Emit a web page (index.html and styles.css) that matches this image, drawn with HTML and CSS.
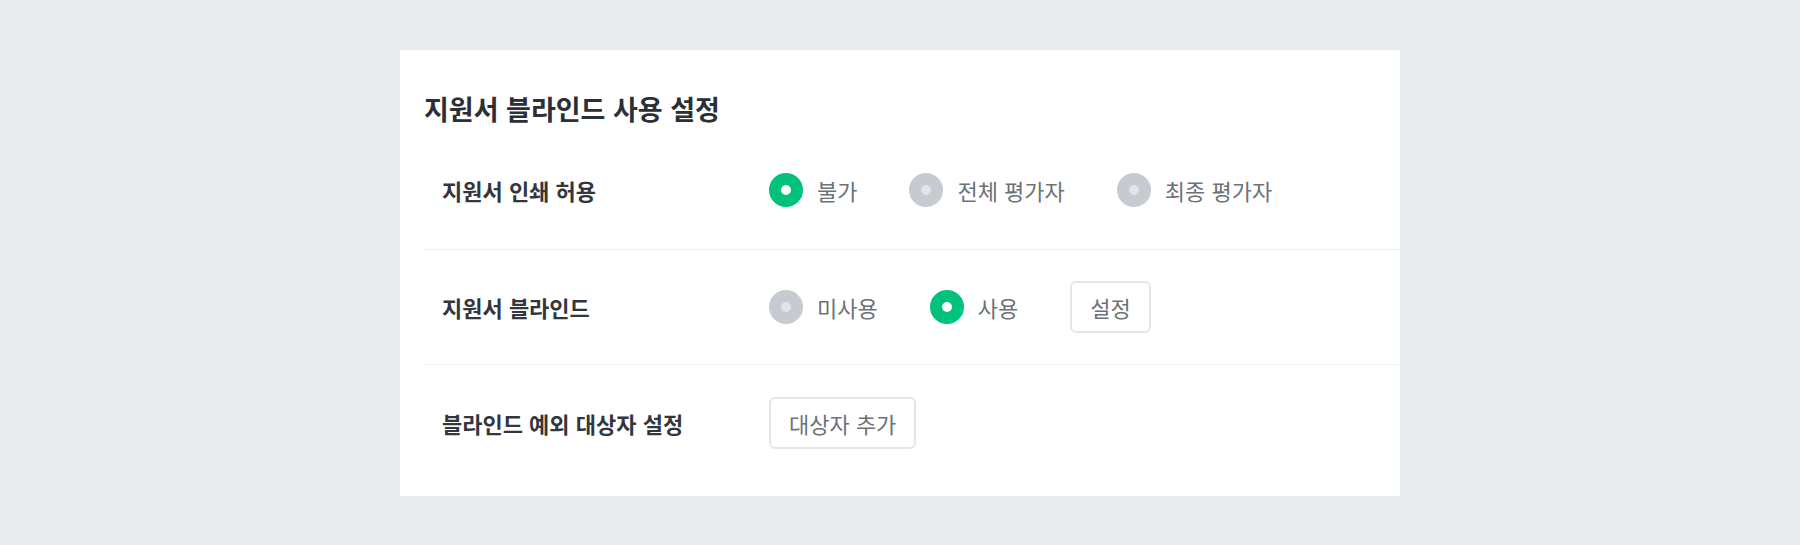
FILE: index.html
```html
<!DOCTYPE html>
<html lang="ko">

<head>
    <meta charset="UTF-8">
    <meta name="viewport" content="width=device-width, initial-scale=1.0">
    <title>지원서 블라인드 사용 설정</title>
    <link rel="stylesheet" href="styles.css">
</head>

<body>
    <div class="box">
        <h2 class="title">지원서 블라인드 사용 설정</h2>

        <div class="rows">
            <div class="row">
                <div class="label">지원서 인쇄 허용</div>
                <div class="options">
                    <label class="option"><span class="radio checked"></span>불가</label>
                    <label class="option"><span class="radio"></span>전체 평가자</label>
                    <label class="option"><span class="radio"></span>최종 평가자</label>
                </div>
            </div>

            <div class="row">
                <div class="label">지원서 블라인드</div>
                <div class="options">
                    <label class="option"><span class="radio"></span>미사용</label>
                    <label class="option"><span class="radio checked"></span>사용</label>
                    <button class="btn">설정</button>
                </div>
            </div>

            <div class="row">
                <div class="label">블라인드 예외 대상자 설정</div>
                <div class="options">
                    <button class="btn">대상자 추가</button>
                </div>
            </div>
        </div>
    </div>
</body>

</html>
```

FILE: styles.css
```css
body {
    margin: 0;
    background: #e8ebee;
    font-family: "Noto Sans CJK KR", "Noto Sans", sans-serif;
}

.box {
    width: 1000px;
    margin: 50px auto 0;
    background: #fff;
    padding: 40px 0 16px 24px;
    box-sizing: border-box;
}

.title {
    margin: 0;
    font-size: 27px;
    line-height: 38px;
    font-weight: 700;
    color: #2b2f36;
}

.rows {
    margin-top: 7px;
}

.row {
    display: flex;
    align-items: center;
    height: 115px;
    box-sizing: border-box;
    padding-left: 18px;
    border-bottom: 1px solid #f0f1f3;
}

.row:first-child {
    padding-bottom: 4px;
}

.row:last-child {
    border-bottom: none;
}

.label {
    width: 327px;
    flex-shrink: 0;
    font-size: 22px;
    font-weight: 700;
    color: #33363c;
}

.options {
    display: flex;
    align-items: center;
}

.option {
    display: flex;
    align-items: center;
    margin-right: 52px;
    font-size: 22px;
    color: #6d7178;
}

.radio {
    width: 34px;
    height: 34px;
    box-sizing: border-box;
    border-radius: 50%;
    border: 12px solid #c8cad2;
    background: #e2e4e9;
    margin-right: 14px;
}

.radio.checked {
    border-color: #00c27c;
    background: #fff;
}

.btn {
    height: 52px;
    padding: 0 18px;
    border: 2px solid #e3e6ee;
    border-radius: 6px;
    background: #fff;
    font-family: inherit;
    font-size: 22px;
    color: #6d7178;
}
```
